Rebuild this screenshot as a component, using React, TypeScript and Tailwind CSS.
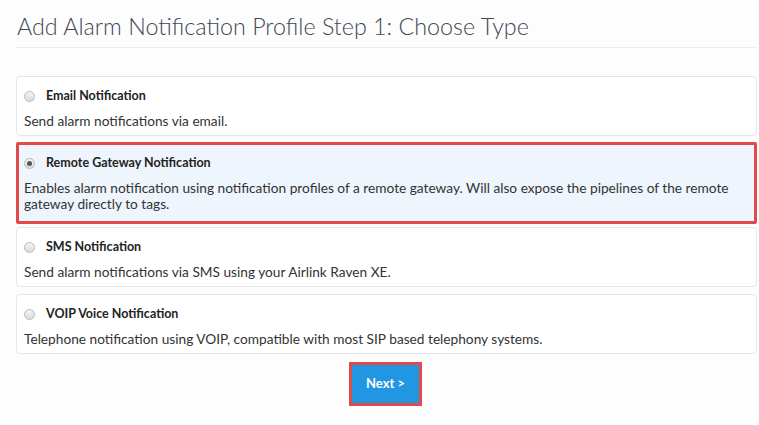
const options = [
  {
    title: 'Email Notification',
    desc: 'Send alarm notifications via email.',
  },
  {
    title: 'Remote Gateway Notification',
    desc: 'Enables alarm notification using notification profiles of a remote gateway. Will also expose the pipelines of the remote gateway directly to tags.',
    selected: true,
  },
  {
    title: 'SMS Notification',
    desc: 'Send alarm notifications via SMS using your Airlink Raven XE.',
  },
  {
    title: 'VOIP Voice Notification',
    desc: 'Telephone notification using VOIP, compatible with most SIP based telephony systems.',
  },
]

function Radio({ checked }: { checked?: boolean }) {
  return (
    <span className="flex h-[11px] w-[11px] shrink-0 items-center justify-center rounded-full border border-[#b9b9b9] bg-gradient-to-b from-[#f4f4f4] to-[#dcdcdc]">
      {checked && <span className="h-[5px] w-[5px] rounded-full bg-[#555]" />}
    </span>
  )
}

export default function App() {
  return (
    <div className="min-h-[425px] w-[759px] bg-[#fdfdfd] pl-4 pr-[2px] text-[#333] [font-family:Lato,'Liberation_Sans',sans-serif]">
      <h1 className="h-[48px] border-b border-[#eeeeee] pt-[12px] pl-[1px] text-[23.3px] font-light leading-[28px] text-[#3d4852]">
        Add Alarm Notification Profile Step 1: Choose Type
      </h1>

      <div className="mt-[28px] flex flex-col">
        {options.map((o, i) => (
          <div
            key={o.title}
            className={
              o.selected
                ? 'mt-[6px] mb-[3px] rounded-[2px] border-[3px] border-[#e14a4a] bg-[#eef5fd] pt-[9px] pb-[9px] pl-[5px] pr-2'
                : i === 3
                  ? 'mt-[7px] rounded-[4px] border border-[#e3e7eb] bg-white pt-[10px] pb-[6px] pl-[7px] pr-2'
                  : 'rounded-[4px] border border-[#e3e7eb] bg-white pt-[10px] pb-[6px] pl-[7px] pr-2'
            }
          >
            <div className="flex h-[18px] items-center">
              <span className="mr-[11px]">
                <Radio checked={o.selected} />
              </span>
              <span className="text-[12.5px] font-bold text-[#222]">{o.title}</span>
            </div>
            <p className="mt-[8px] text-[13.7px] leading-[16px] text-[#333]">{o.desc}</p>
          </div>
        ))}
      </div>

      <div className="mt-[8px] flex justify-center pr-[2px]">
        <button className="h-[44px] w-[73px] border-[3px] border-[#e14a4a] bg-[#2196e3] text-[13px] font-bold text-white">
          Next &gt;
        </button>
      </div>
    </div>
  )
}
